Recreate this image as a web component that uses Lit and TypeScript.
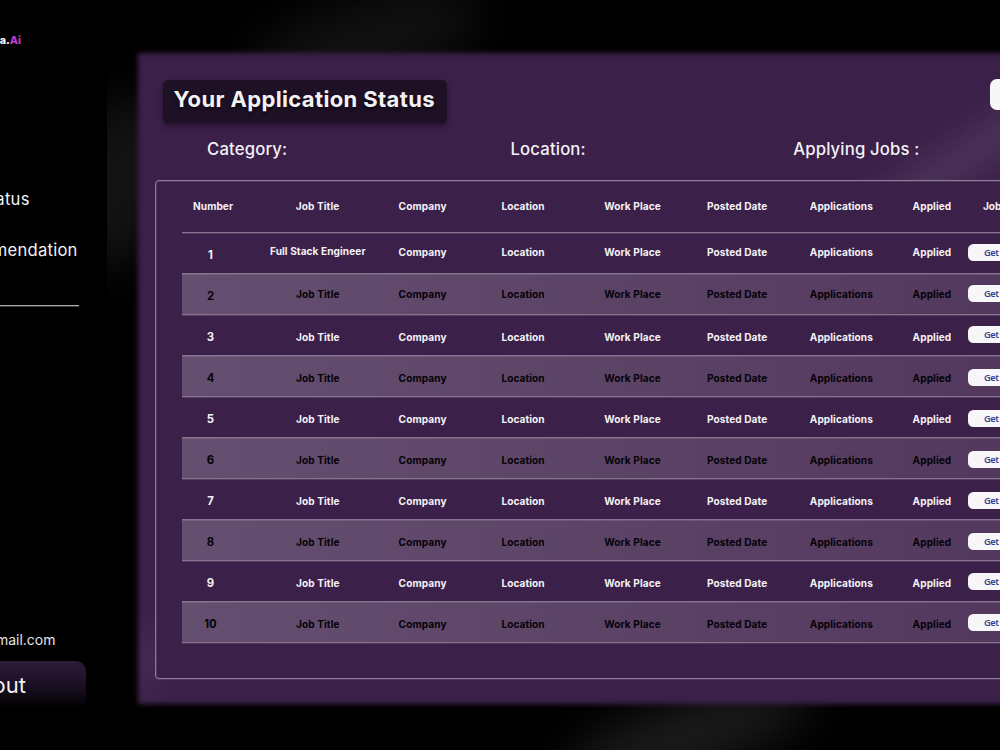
import { LitElement, html, css } from "lit";
import { customElement } from "lit/decorators.js";
import { styleMap } from "lit/directives/style-map.js";

interface JobRow {
  number: number;
  title: string;
  dNumber: number;
  dTitle: number;
  dText: number;
  dButton: number;
}

const HEADINGS = ["Number", "Job Title", "Company", "Location", "Work Place", "Posted Date", "Applications", "Applied", "Job Link"];
const DETAILS = ["Company", "Location", "Work Place", "Posted Date", "Applications", "Applied"];

const ROWS: JobRow[] = Array.from({ length: 10 }, (_, i) => {
  const base = { number: i + 1, title: "Job Title", dNumber: 3, dTitle: 3, dText: 3, dButton: 2.5 };
  if (i === 0) return { ...base, title: "Full Stack Engineer", dTitle: -1, dText: 0, dButton: 0.5 };
  if (i === 1) return { ...base, dTitle: 1, dText: 1, dButton: 0.5 };
  if (i === 2) return { ...base, dButton: 0.5 };
  if (i > 7) return { ...base, dButton: 1.5 };
  return base;
});

@customElement("app-root")
export class AppRoot extends LitElement {
  static styles = css`
    :host {
      display: block;
      width: 1000px;
      height: 750px;
      overflow: hidden;
      background: #000;
      color: #f4f1f5;
      font-family: Inter, "Liberation Sans", sans-serif;
    }
    * { box-sizing: border-box; }
    .shell { display: grid; grid-template-columns: 107px 893px; height: 750px; }
    .side { display: flex; flex-direction: column; height: 750px; overflow: hidden; white-space: nowrap; }
    .side > * { display: flex; justify-content: flex-end; flex: none; align-items: center; }
    .brand { width: 21px; height: 16px; margin-top: 32px; font-size: 10.7px; font-weight: 800; color: #fff; }
    .brand em { font-style: normal; color: #c13bc4; }
    .link { height: 24px; font-size: 16.6px; letter-spacing: 0.25px; }
    .status { width: 29.7px; margin-top: 139px; }
    .recommend { width: 77.7px; margin-top: 27px; }
    .rule { width: 78.5px; height: 2px; margin-top: 43px; background: linear-gradient(#a9a9a9 50%, #3c3c3c 50%); }
    .mail { width: 55.5px; height: 20px; margin-top: 322px; font-size: 14px; color: #e4e2e5; }
    .logout {
      width: 86px; height: 48px; margin-top: 12px; padding-right: 60px;
      border-radius: 0 10px 10px 0; font-size: 22px;
      background: linear-gradient(#2f1b3a, #1b1023 50%, #000 98%);
    }
    .main { position: relative; z-index: 0; padding: 53px 0 0 31px; overflow: hidden; background: #000; }
    .glow { position: absolute; z-index: -1; border-radius: 50%; filter: blur(24px); }
    .glow.west { left: -45px; top: 95px; width: 110px; height: 175px; background: #131313; transform: rotate(14deg); }
    .glow.north { left: 130px; top: 0; width: 250px; height: 90px; background: #101010; transform: rotate(-18deg); }
    .glow.south { left: 450px; top: 704px; width: 260px; height: 64px; background: #1d1d1d; transform: rotate(-18deg); }
    .panel { position: relative; z-index: 0; width: 1000px; height: 651px; padding: 27px 0 0 17px; }
    .panel::before {
      content: ""; position: absolute; inset: 0; z-index: -1; filter: blur(2.4px);
      background: radial-gradient(ellipse 32px 56px at 8px 608px, #442a52, transparent), #3b2049;
    }
    .streak {
      position: absolute; z-index: -1; left: 705px; top: 84px; width: 240px; height: 44px;
      background: rgba(255, 255, 255, 0.07); filter: blur(13px); transform: rotate(-33deg);
    }
    .top { display: flex; justify-content: space-between; width: 983px; height: 43px; padding-left: 8px; }
    .title {
      width: 283.5px; height: 43px; margin: 0; padding: 0 10.5px; border-radius: 5px; background: #1e1025;
      box-shadow: 0 3px 5px rgba(20, 5, 28, 0.55); font-size: 22px; line-height: 39px; font-weight: 700;
      letter-spacing: 0.37px; white-space: nowrap; text-shadow: 0 2px 3px rgba(0, 0, 0, 0.6);
    }
    .action { width: 148px; height: 31px; margin-top: -1px; border-radius: 7px; background: #f7f6f8; }
    .filters {
      display: grid; grid-template-columns: 303.5px 282.7px 1fr; height: 57px; padding: 15px 0 0 52px;
      font-size: 16.7px; line-height: 22px; font-weight: 550; letter-spacing: 0.16px; white-space: nowrap;
    }
    .table {
      width: 960px; height: 499px; border: 1px solid #8d7c97; border-radius: 4px;
      box-shadow: inset 0 1px 0 #50375d, inset 1px 0 0 #503a5d, 0 1px 0 #50375d;
      background: #3b2049; padding-left: 26px; font-size: 10.1px; letter-spacing: 0.08px; line-height: 12px; font-weight: 700; white-space: nowrap;
    }
    .head, .row { display: grid; grid-template-columns: 102.8px repeat(7, 102.8px) 90px; padding-left: 11px; }
    .head { height: 51px; padding-top: 18.5px; }
    .head .last { margin-left: -32.5px; }
    .row { height: 41px; border-top: 1px solid #86748f; padding-top: 13px; box-shadow: inset 0 1px 0 rgba(160, 140, 170, 0.28); }
    .row:nth-child(odd) {
      background: linear-gradient(90deg, #654f70, #5c4467 50%, #52385d 100%);
      background-size: 820px 100%; color: #050207;
    }
    .end { height: 2px; background: linear-gradient(#86748f 50%, #50375d 50%); }
    .num { width: 35px; text-align: center; font-size: 11.3px; }
    .job { width: 44px; display: flex; justify-content: center; }
    .get {
      width: 70px; height: 17.5px; margin-left: -47.5px; padding: 0 0 0 16px; border: 0; border-radius: 5.5px;
      background: #f7f6f8; color: #35418f; font: 600 9.2px/17px "Noto Sans", sans-serif; letter-spacing: -0.35px; text-align: left;
    }
  `;

  private shift(px: number) {
    return styleMap({ marginTop: `${px}px` });
  }

  private renderRow(r: JobRow) {
    return html`
      <div class="row">
        <span class="num" style=${this.shift(r.dNumber)}>${r.number}</span>
        <span class="job" style=${this.shift(r.dTitle)}>${r.title}</span>
        ${DETAILS.map((d) => html`<span style=${this.shift(r.dText)}>${d}</span>`)}
        <button class="get" style=${this.shift(r.dButton - 3)}>Get</button>
      </div>
    `;
  }

  render() {
    return html`
      <div class="shell">
        <nav class="side">
          <div class="brand">a.<em>Ai</em></div>
          <div class="link status">atus</div>
          <div class="link recommend">mendation</div>
          <div class="rule"></div>
          <div class="mail">mail.com</div>
          <div class="logout">out</div>
        </nav>
        <main class="main">
          <div class="glow west"></div>
          <div class="glow north"></div>
          <div class="glow south"></div>
          <section class="panel">
            <div class="streak"></div>
            <div class="top">
              <h1 class="title">Your Application Status</h1>
              <div class="action"></div>
            </div>
            <div class="filters">
              <span>Category:</span><span>Location:</span><span>Applying Jobs :</span>
            </div>
            <div class="table">
              <div class="head">
                ${HEADINGS.map((h, i) => html`<span class=${i === 8 ? "last" : ""}>${h}</span>`)}
              </div>
              ${ROWS.map((r) => this.renderRow(r))}
              <div class="end"></div>
            </div>
          </section>
        </main>
      </div>
    `;
  }
}
